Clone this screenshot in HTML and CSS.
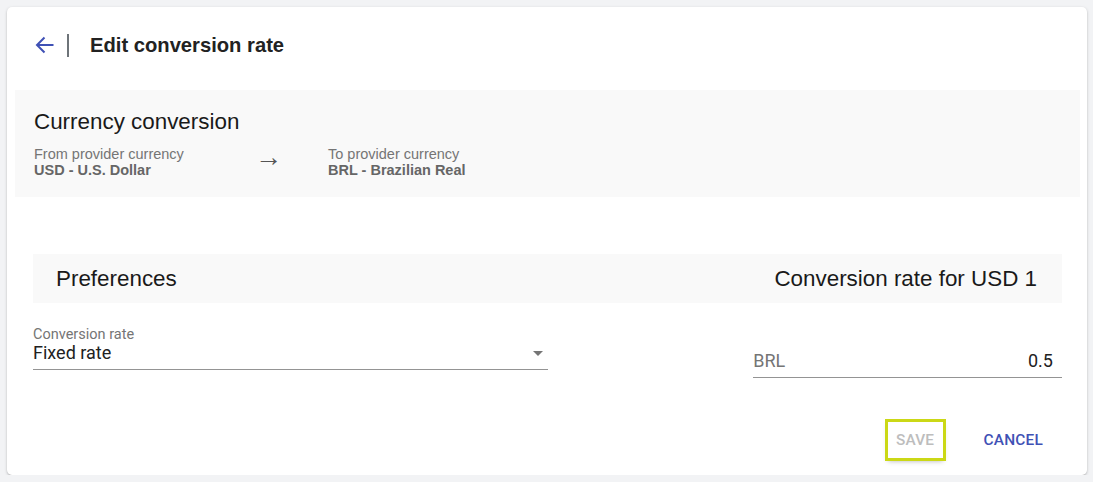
FILE: index.html
```html
<!DOCTYPE html>
<html lang="en">
<head>
<meta charset="utf-8">
<title>Edit conversion rate</title>
<link rel="stylesheet" href="styles.css">
</head>
<body>
<div class="card">
  <div class="header">
    <button class="back" aria-label="Back">
      <svg width="20" height="20" viewBox="0 0 20 20"><path d="M18.5 10H2M9.5 2.5L2 10l7.5 7.5" fill="none" stroke="#3f51b5" stroke-width="2"/></svg>
    </button>
    <span class="divider"></span>
    <h1 class="title">Edit conversion rate</h1>
  </div>

  <section class="currency">
    <h2 class="currency-title">Currency conversion</h2>
    <div class="currency-row">
      <div class="cur-col cur-from">
        <div class="cur-label">From provider currency</div>
        <div class="cur-value">USD - U.S. Dollar</div>
      </div>
      <div class="cur-arrow">&rarr;</div>
      <div class="cur-col">
        <div class="cur-label">To provider currency</div>
        <div class="cur-value">BRL - Brazilian Real</div>
      </div>
    </div>
  </section>

  <section class="prefs">
    <div class="prefs-head">
      <h2 class="prefs-title">Preferences</h2>
      <h2 class="prefs-title">Conversion rate for USD 1</h2>
    </div>
    <div class="fields">
      <div class="field field-select">
        <div class="field-label">Conversion rate</div>
        <div class="field-input">
          <span>Fixed rate</span>
          <span class="caret"></span>
        </div>
      </div>
      <div class="field field-rate">
        <div class="field-input">
          <span class="prefix">BRL</span>
          <span class="value">0.5</span>
        </div>
      </div>
    </div>
    <div class="actions">
      <button class="btn btn-save" disabled>SAVE</button>
      <button class="btn btn-cancel">CANCEL</button>
    </div>
  </section>
</div>
</body>
</html>
```

FILE: styles.css
```css
* { box-sizing: border-box; }
html, body { margin: 0; padding: 0; }
body {
  background: #f2f3f5;
  padding: 7px 6px 0 7px;
  font-family: "Liberation Sans", Arial, sans-serif;
  color: #212121;
}
.card {
  width: 1080px;
  height: 468px;
  background: #fff;
  border-radius: 5px;
  box-shadow: 0 1px 3px rgba(0,0,0,0.22), 0 1px 1px rgba(0,0,0,0.08);
}
.header {
  display: flex;
  align-items: center;
  height: 76px;
  padding: 0 28px;
  margin-bottom: 7px;
}
.back {
  border: 0;
  background: none;
  padding: 0;
  width: 20px;
  height: 20px;
  display: flex;
  cursor: pointer;
}
.divider {
  width: 2px;
  height: 23px;
  background: #6e7479;
  margin-left: 12px;
}
.title {
  margin: 0 0 0 21px;
  font-size: 20.2px;
  font-weight: bold;
  color: #222;
}
.currency {
  margin: 0 7px 0 8px;
  background: #f9f9f9;
  padding: 19px 19px 19px;
  height: 107px;
}
.currency-title {
  margin: 0;
  font-size: 22.4px;
  font-weight: normal;
  line-height: 26px;
  color: #1a1a1a;
}
.currency-row {
  display: flex;
  align-items: center;
  margin-top: 11px;
}
.cur-col { font-size: 14.5px; line-height: 16px; }
.cur-from { width: 221px; }
.cur-label { color: #757575; }
.cur-value { color: #666; font-weight: bold; }
.cur-arrow {
  width: 73px;
  font-family: "Liberation Sans", Arial, sans-serif;
  font-size: 27px;
  color: #555;
  line-height: 16px;
  padding-bottom: 10px;
}
.prefs {
  margin: 57px 25px 0 26px;
}
.prefs-head {
  display: flex;
  justify-content: space-between;
  align-items: center;
  height: 49px;
  background: #f9f9f9;
  padding: 0 25px 0 23px;
}
.prefs-title {
  margin: 0;
  font-size: 22.4px;
  font-weight: normal;
  color: #1a1a1a;
}
.fields {
  display: grid;
  grid-template-columns: 50% 20% 30%;
  align-items: start;
  font-family: Roboto, "Liberation Sans", sans-serif;
}
.field-select { grid-column: 1; margin-top: 24px; }
.field-rate { grid-column: 3; margin-top: 48px; }
.field-label {
  font-size: 14.5px;
  line-height: 16px;
  color: #757575;
}
.field-input {
  display: flex;
  align-items: center;
  justify-content: space-between;
  border-bottom: 1px solid #949494;
  padding-bottom: 6px;
  height: 27px;
  font-size: 18px;
  line-height: 20px;
  color: #212121;
}
.caret {
  width: 0;
  height: 0;
  border-left: 5px solid transparent;
  border-right: 5px solid transparent;
  border-top: 5px solid #757575;
  margin-right: 5px;
}
.prefix { color: #757575; }
.value { margin-right: 9px; color: #212121; }
.actions {
  display: flex;
  justify-content: flex-end;
  gap: 33px;
  margin-top: 44px;
  padding-right: 11px;
}
.btn {
  font-family: Roboto, "Liberation Sans", sans-serif;
  font-weight: 500;
  font-size: 15.4px;
  letter-spacing: 0.2px;
  height: 36px;
  padding: 0 8px;
  border: 0;
  background: #fff;
  border-radius: 0;
}
.btn-save {
  color: #bdbdbd;
  outline: 3px solid #cbd816;
  box-shadow: 0 3px 5px rgba(0,0,0,0.3);
  min-width: 55px;
}
.btn-cancel {
  color: #3f51b5;
  cursor: pointer;
}
```
